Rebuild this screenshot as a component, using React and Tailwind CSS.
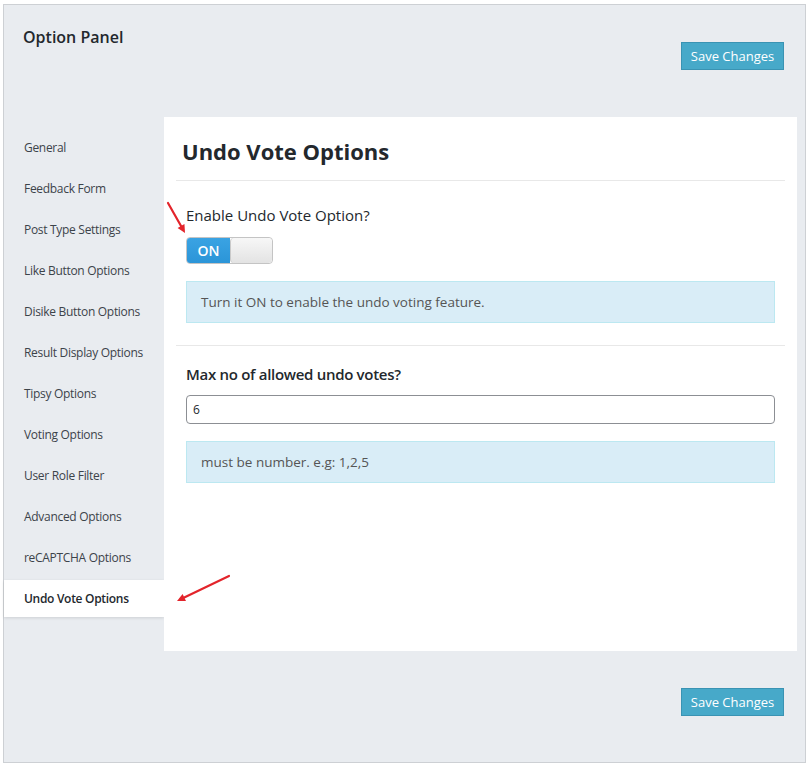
import React, { useState } from "react";

const navItems = [
  "General",
  "Feedback Form",
  "Post Type Settings",
  "Like Button Options",
  "Disike Button Options",
  "Result Display Options",
  "Tipsy Options",
  "Voting Options",
  "User Role Filter",
  "Advanced Options",
  "reCAPTCHA Options",
  "Undo Vote Options",
];

const SaveButton = () => (
  <button className="h-[28px] w-[103px] bg-[#47a9c9] border border-[#3a93b3] text-white text-[13px] leading-none">
    Save Changes
  </button>
);

const Arrow = ({ x1, y1, x2, y2, className }) => {
  const a = Math.atan2(y2 - y1, x2 - x1);
  const len = 9;
  const spread = 0.45;
  const p1 = [x2 - len * Math.cos(a - spread), y2 - len * Math.sin(a - spread)];
  const p2 = [x2 - len * Math.cos(a + spread), y2 - len * Math.sin(a + spread)];
  return (
    <svg className={className} width="810" height="765" viewBox="0 0 810 765">
      <line x1={x1} y1={y1} x2={x2 - 4 * Math.cos(a)} y2={y2 - 4 * Math.sin(a)} stroke="#e3242b" strokeWidth="2.2" strokeLinecap="round" />
      <polygon points={`${x2},${y2} ${p1[0]},${p1[1]} ${p2[0]},${p2[1]}`} fill="#e3242b" />
    </svg>
  );
};

export default function App() {
  const [on, setOn] = useState(true);
  const [max, setMax] = useState("6");

  return (
    <div className="relative w-[810px] h-[765px] bg-white pl-[3px] pt-[4px]" style={{ fontFamily: '"Open Sans", "Noto Sans", sans-serif' }}>
      <div className="w-[803px] h-[759px] border border-[#cdd0d4] bg-[#e9ecf0] flex flex-col">
        {/* Header */}
        <div className="h-[112px] flex justify-between pl-[19px] pr-[21px] pt-[21px]">
          <h1 className="text-[16px] leading-[22px] font-semibold text-[#23282d]">Option Panel</h1>
          <div className="mt-[16px]">
            <SaveButton />
          </div>
        </div>

        <div className="flex">
          {/* Sidebar */}
          <div className="w-[160px] pt-[12px]">
            {navItems.map((item, i) => {
              const active = i === navItems.length - 1;
              return (
                <div
                  key={item}
                  className={`h-[37px] mb-[4px] flex items-center pl-[20px] text-[12px] tracking-[-0.3px] ${
                    active ? "bg-white font-semibold text-[#23282d] shadow-[0_1px_3px_rgba(0,0,0,0.12)]" : "text-[#3c434a]"
                  }`}
                >
                  {item}
                </div>
              );
            })}
          </div>

          {/* Content */}
          <div className="w-[633px] h-[534px] bg-white px-[12px]">
            <div className="border-b border-[#e8e8e8] px-[6px] pt-[19px] pb-[14px]">
              <h2 className="text-[22px] leading-[30px] font-bold text-[#23282d]">Undo Vote Options</h2>
            </div>

            <div className="px-[10px] pt-[24px] pb-[22px] border-b border-[#e8e8e8]">
              <div className="text-[15px] leading-[20px] text-[#23282d]">Enable Undo Vote Option?</div>
              <button
                onClick={() => setOn(!on)}
                className="mt-[12px] h-[27px] w-[87px] flex rounded-[4px] border border-[#c4c4c4] overflow-hidden"
              >
                <span className="w-[43px] h-full flex items-center justify-center bg-gradient-to-b from-[#3aa3e3] to-[#2b95d8] text-white text-[14px] font-semibold">
                  {on ? "ON" : "OFF"}
                </span>
                <span className="flex-1 h-full rounded-[4px] border-l border-[#c9c9c9] bg-gradient-to-b from-[#f7f7f7] to-[#e3e3e3]" />
              </button>
              <div className="mt-[17px] h-[42px] bg-[#d9edf7] border border-[#bce8f1] flex items-center pl-[14px] text-[13.5px] text-[#555]">
                Turn it ON to enable the undo voting feature.
              </div>
            </div>

            <div className="px-[10px] pt-[18px]">
              <div className="text-[15px] leading-[20px] font-semibold tracking-[-0.3px] text-[#23282d]">Max no of allowed undo votes?</div>
              <input
                value={max}
                onChange={(e) => setMax(e.target.value)}
                className="mt-[11px] h-[29px] w-full border border-[#8c8f94] rounded-[4px] px-[6px] text-[12px] text-[#23282d] outline-none"
              />
              <div className="mt-[17px] h-[42px] bg-[#d9edf7] border border-[#bce8f1] flex items-center pl-[14px] text-[13.5px] text-[#555]">
                must be number. e.g: 1,2,5
              </div>
            </div>
          </div>
        </div>

        {/* Footer */}
        <div className="flex justify-end pr-[21px] pt-[37px]">
          <SaveButton />
        </div>
      </div>

      <Arrow className="absolute left-0 top-0 pointer-events-none" x1={168} y1={203} x2={185} y2={233} />
      <Arrow className="absolute left-0 top-0 pointer-events-none" x1={229} y1={576} x2={177} y2={601} />
    </div>
  );
}
